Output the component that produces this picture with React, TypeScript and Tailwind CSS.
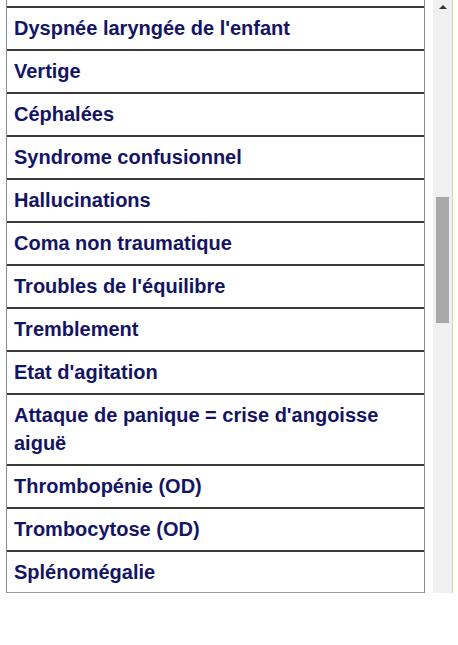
const items = [
  "Dyspnée laryngée de l'enfant",
  "Vertige",
  "Céphalées",
  "Syndrome confusionnel",
  "Hallucinations",
  "Coma non traumatique",
  "Troubles de l'équilibre",
  "Tremblement",
  "Etat d'agitation",
  "Attaque de panique = crise d'angoisse aiguë",
  "Thrombopénie (OD)",
  "Trombocytose (OD)",
  "Splénomégalie",
];

export default function App() {
  return (
    <div className="h-[645px] w-[458px] bg-white" style={{ fontFamily: '"Liberation Sans", Arial, sans-serif' }}>
      <div className="flex h-[593px] w-[453px]">
        <div className="flex-1 overflow-hidden pl-[6px] pr-[8px]">
          <ul className="border-x border-[#8c8c8c]">
            <li className="h-[6px]" />
            {items.map((t, i) => (
              <li
                key={t}
                className={
                  "border-t-2 border-[#3a3a3a] px-[7px] pt-[6px] text-[20px] font-bold leading-[28px] text-[#141464]" +
                  (i === items.length - 1 ? " border-b border-b-[#9a9a9a] pb-[6px]" : " pb-[7px]")
                }
              >
                {t}
              </li>
            ))}
          </ul>
        </div>
        <div className="relative w-[19px] bg-[#f0f0f0]">
          <div className="flex h-[14px] items-center justify-center">
            <div className="h-0 w-0 border-x-[4px] border-b-[4px] border-x-transparent border-b-[#333]" />
          </div>
          <div className="absolute left-[3px] top-[197px] h-[126px] w-[13px] bg-[#a8a8a8]" />
        </div>
        <div className="w-px bg-[#d4d49a]" />
      </div>
    </div>
  );
}
